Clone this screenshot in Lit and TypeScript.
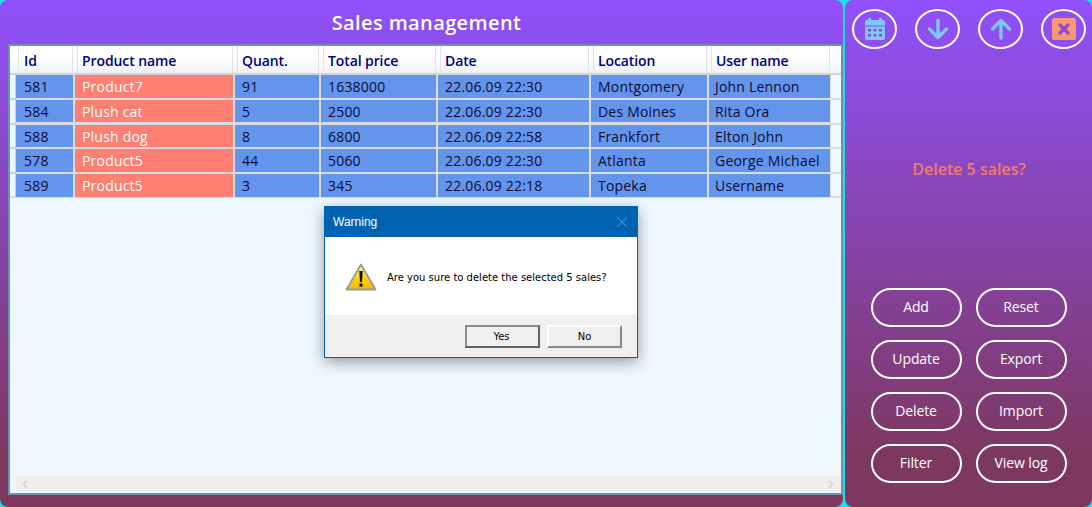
import { LitElement, html, css, svg } from "lit";
import { customElement } from "lit/decorators.js";

const columns = ["Id", "Product name", "Quant.", "Total price", "Date", "Location", "User name"];
const rows = [
  ["581", "Product7", "91", "1638000", "22.06.09 22:30", "Montgomery", "John Lennon"],
  ["584", "Plush cat", "5", "2500", "22.06.09 22:30", "Des Moines", "Rita Ora"],
  ["588", "Plush dog", "8", "6800", "22.06.09 22:58", "Frankfort", "Elton John"],
  ["578", "Product5", "44", "5060", "22.06.09 22:30", "Atlanta", "George Michael"],
  ["589", "Product5", "3", "345", "22.06.09 22:18", "Topeka", "Username"],
];
const actions = ["Add", "Reset", "Update", "Export", "Delete", "Import", "Filter", "View log"];

const calendar = svg`<svg class="ico" viewBox="0 0 24 24"><path fill="#7fc8fb" d="M5 1h3v2h8V1h3v2h1.500A1.500 1.500 0 0 1 22 4.500V8.500H2V4.500A1.500 1.500 0 0 1 3.500 3H5zM2 9.500h20v12a1.500 1.500 0 0 1-1.500 1.500h-17A1.500 1.500 0 0 1 2 21.500z"/><g fill="#8a4cd8"><rect x="5" y="12" width="3" height="2.500"/><rect x="10.500" y="12" width="3" height="2.500"/><rect x="16" y="12" width="3" height="2.500"/><rect x="5" y="17" width="3" height="2.500"/><rect x="10.500" y="17" width="3" height="2.500"/><rect x="16" y="17" width="3" height="2.500"/></g></svg>`;
const down = svg`<svg class="ico" viewBox="0 0 24 24"><path fill="none" stroke="#7fc8fb" stroke-width="3.400" stroke-linecap="round" stroke-linejoin="round" d="M12 3.500V20.500M3.500 12 12 20.500 20.500 12"/></svg>`;
const up = svg`<svg class="ico" viewBox="0 0 24 24"><path fill="none" stroke="#7fc8fb" stroke-width="3.400" stroke-linecap="round" stroke-linejoin="round" d="M12 21V3.500M3.500 12 12 3.500 20.500 12"/></svg>`;
const cancel = svg`<svg class="ico" viewBox="0 0 24 24"><rect x="0" y="1" width="24" height="22" rx="2.500" fill="#fb9673"/><path stroke="#8a4cd8" stroke-width="3.400" stroke-linecap="round" d="M8 8 16 16M16 8 8 16"/></svg>`;
const warning = svg`<svg width="32" height="28" viewBox="0 0 32 28"><defs><linearGradient id="w" x1="0" y1="0" x2="0" y2="1"><stop offset="0" stop-color="#fdf3a8"/><stop offset="0.55" stop-color="#fbd20f"/><stop offset="1" stop-color="#f2b705"/></linearGradient></defs><path d="M16 1.500 30.500 26.500H1.500Z" fill="url(#w)" stroke="#9a9a9a" stroke-width="1.800" stroke-linejoin="round"/><path d="M14.300 8h3.400l-.7 11h-2z" fill="#111"/><rect x="14.500" y="20.500" width="3" height="3.200" fill="#111"/></svg>`;

@customElement("app-root")
export class AppRoot extends LitElement {
  static styles = css`
    :host { display: block; width: 1092px; height: 507px; background: #fff; font-family: "Open Sans", "Noto Sans", sans-serif; position: relative; overflow: hidden; }
    * { box-sizing: border-box; }
    .page { display: grid; grid-template-columns: 843px 1fr; width: 1092px; height: 507px; background: #19e0ea; }
    .panel { background: linear-gradient(180deg, #9150fb 0%, #7d3860 90%, #7d3860 100%); border-radius: 8px; }
    .main { display: flex; flex-direction: column; padding: 0 0 12px 8px; }
    .title { height: 44px; display: flex; align-items: center; justify-content: center; color: #fff; font-size: 20px; font-weight: 600; letter-spacing: 0.38px; padding-left: 2px; }
    .table { flex: 1; border: 2px solid #6a93b0; background: aliceblue; display: flex; flex-direction: column; min-height: 0; }
    .head, .row { display: grid; grid-template-columns: 4px 57px 158px 84px 115px 151px 116px 121px 1fr; column-gap: 2px; }
    .head { height: 29px; background: linear-gradient(180deg, #fff 45%, #eef1f4 100%); border-bottom: 2px solid #cfd5da; }
    .head > div { color: #000080; font-size: 14px; font-weight: 600; letter-spacing: -0.1px; padding: 3px 0 0 7px; border-right: 1px solid #dfe3e7; background: linear-gradient(#dfe3e7, #dfe3e7) no-repeat 2px 0 / 1px 100%; white-space: nowrap; line-height: 24px; }
    .head > .first { padding-left: 8px; }
    .head > .stub { padding: 0; background: none; border: 0; }
    .head > .tail { background: none; border: 0; }
    .rows { flex: 1; display: flex; flex-direction: column; min-height: 0; }
    .row { height: 24.75px; background: #d9dde1; }
    .row:last-child { height: 23.5px; }
    .row .stub { background: aliceblue; border-right: 1px solid #a5dcf3; border-bottom: 2px solid #a5dcf3; margin-right: -2px; }
    .row:last-child .stub { border-bottom-color: #d9dde1; }
    .row .tail { background: aliceblue; border-bottom: 2px solid #d9dde1; margin-left: -1px; }
    .cell { background: cornflowerblue; color: #0c0c34; font-size: 14px; letter-spacing: 0.2px; line-height: 23px; height: 22.5px; padding-left: 7px; white-space: nowrap; overflow: hidden; }
    .cell.first { padding-left: 8px; }
    .cell.last { padding-left: 6px; }
    .cell.product { background: #ff8072; color: #fff; }
    .scroll { height: 16px; margin: 0 0 1px 6px; background: #eee; display: flex; align-items: center; justify-content: space-between; padding: 0 7px 0 6px; }
    .side { display: flex; flex-direction: column; margin-left: 2px; padding: 9px 0 0 0; }
    .tools { display: flex; justify-content: space-between; padding: 0 6px 0 7px; }
    .tool { width: 45px; height: 40px; border: 2px solid #fff; border-radius: 50%; display: flex; align-items: center; justify-content: center; }
    .ico { width: 24px; height: 24px; display: block; }
    .prompt { flex: 1; display: flex; align-items: center; justify-content: center; color: #f47a6a; font-size: 16px; font-weight: 600; padding-left: 1px; }
    .actions { display: grid; grid-template-columns: 91px 91px; column-gap: 14px; row-gap: 13px; justify-content: center; padding: 0 0 24px 0; }
    .action { height: 39px; border: 2px solid #fff; border-radius: 20px; display: flex; align-items: center; justify-content: center; color: #fff; font-size: 14px; letter-spacing: -0.1px; padding-bottom: 2px; }
    .dialog { position: absolute; left: 324px; top: 206px; width: 314px; height: 152px; background: #fff; border: 1px solid #0063b1; box-shadow: 0 4px 14px rgba(0,0,0,0.38); display: flex; flex-direction: column; font-family: "DejaVu Sans", sans-serif; }
    .dlg-title { height: 30px; background: #0063b1; color: #fff; display: flex; align-items: center; justify-content: space-between; padding: 0 9px 0 8px; font-family: "Liberation Sans", sans-serif; font-size: 12px; }
    .dlg-body { flex: 1; display: flex; align-items: center; gap: 10px; padding: 2px 0 0 20px; font-size: 10px; color: #000; }
    .dlg-foot { height: 42px; background: #f0f0f0; display: flex; justify-content: flex-end; gap: 7px; padding: 10px 15px 0 0; }
    .btn { width: 75px; height: 23px; background: #f0f0f0; border: 2px solid; border-color: #fff #8a8a8a #8a8a8a #fff; display: flex; align-items: center; justify-content: center; font-size: 10px; color: #000; }
    .btn.def { border-color: #8c8c8c #606060 #606060 #8c8c8c; padding-right: 2px; }
  `;

  render() {
    return html`
      <div class="page">
        <div class="panel main">
          <div class="title">Sales management</div>
          <div class="table">
            <div class="head">
              <div class="stub"></div>
              ${columns.map((c, i) => html`<div class="${i === 0 ? "first" : ""}">${c}</div>`)}
              <div class="tail"></div>
            </div>
            <div class="rows">
              ${rows.map(
                (r) => html`<div class="row">
                  <div class="stub"></div>
                  ${r.map((v, i) => html`<div class="cell ${i === 0 ? "first" : ""} ${i === 1 ? "product" : ""} ${i === 6 ? "last" : ""}">${v}</div>`)}
                  <div class="tail"></div>
                </div>`
              )}
            </div>
            <div class="scroll">
              <svg width="6" height="9" viewBox="0 0 6 9"><path d="M5 1 1.500 4.500 5 8" fill="none" stroke="#d0d0d0" stroke-width="1.500"/></svg>
              <svg width="6" height="9" viewBox="0 0 6 9"><path d="M1 1 4.500 4.500 1 8" fill="none" stroke="#d0d0d0" stroke-width="1.500"/></svg>
            </div>
          </div>
        </div>
        <div class="panel side">
          <div class="tools">
            <div class="tool">${calendar}</div>
            <div class="tool">${down}</div>
            <div class="tool">${up}</div>
            <div class="tool">${cancel}</div>
          </div>
          <div class="prompt">Delete 5 sales?</div>
          <div class="actions">
            ${actions.map((a) => html`<div class="action">${a}</div>`)}
          </div>
        </div>
      </div>
      <div class="dialog">
        <div class="dlg-title">
          <span>Warning</span>
          <svg width="12" height="12" viewBox="0 0 12 12"><path d="M1 1 11 11M11 1 1 11" stroke="#3f86c4" stroke-width="1.200"/></svg>
        </div>
        <div class="dlg-body">${warning}<span>Are you sure to delete the selected 5 sales?</span></div>
        <div class="dlg-foot">
          <div class="btn def">Yes</div>
          <div class="btn">No</div>
        </div>
      </div>
    `;
  }
}
